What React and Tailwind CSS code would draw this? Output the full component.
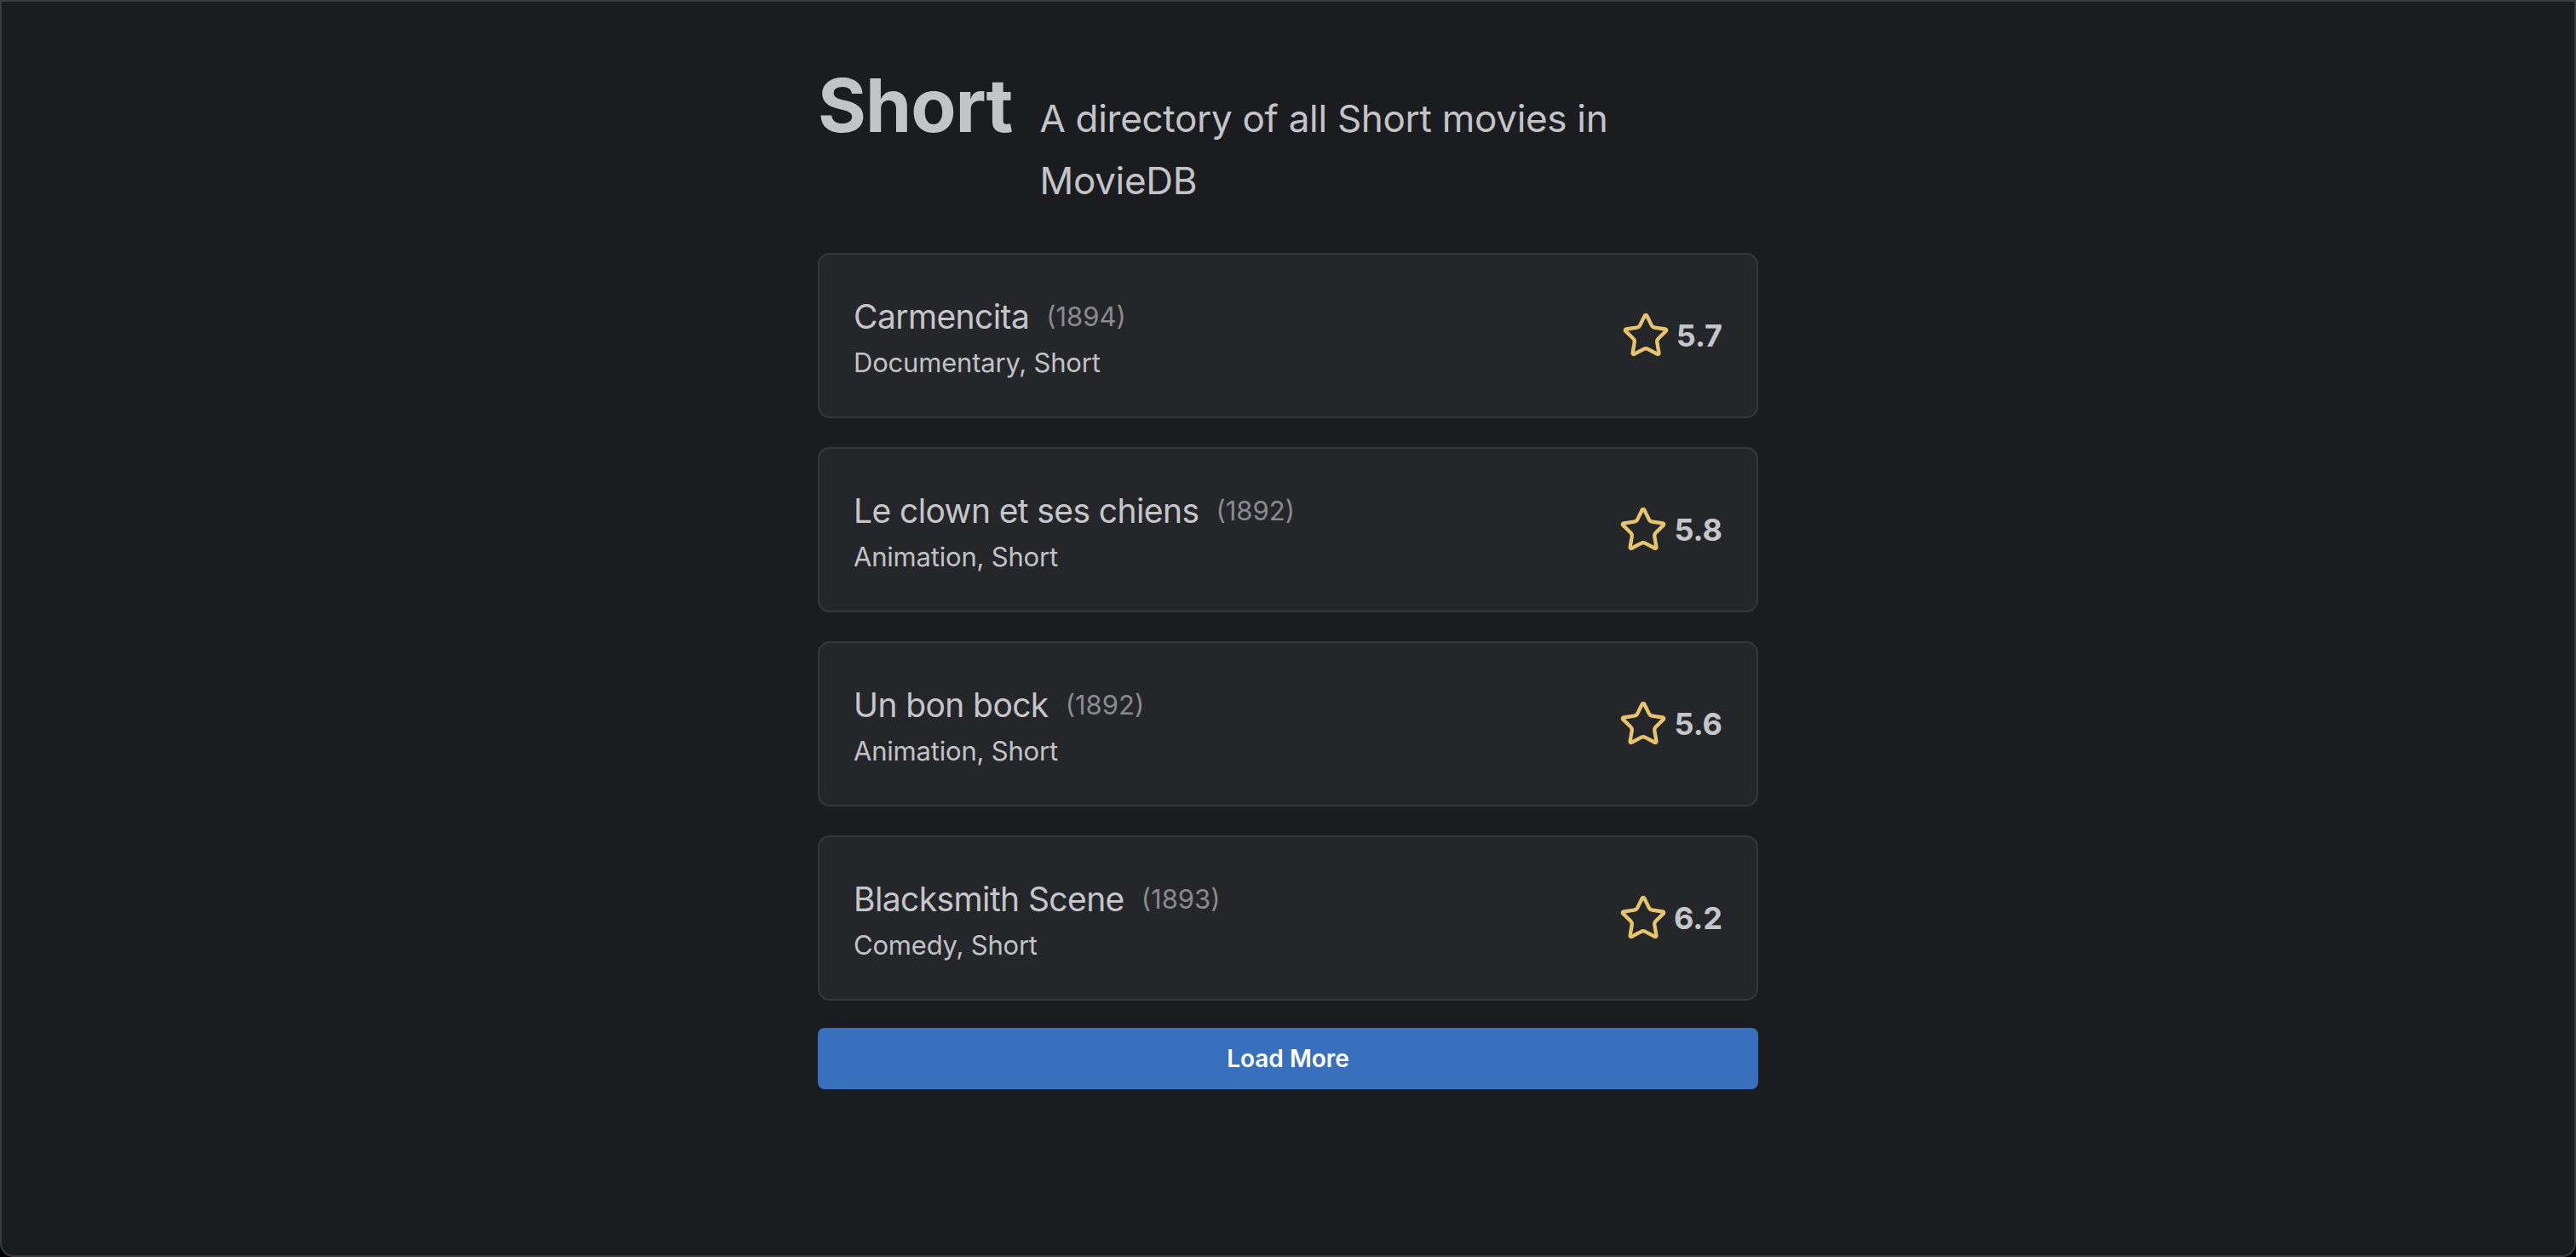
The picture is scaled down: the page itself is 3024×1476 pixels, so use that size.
import React from 'react';

const movies = [
  { title: 'Carmencita', year: 1894, genres: 'Documentary, Short', rating: '5.7' },
  { title: 'Le clown et ses chiens', year: 1892, genres: 'Animation, Short', rating: '5.8' },
  { title: 'Un bon bock', year: 1892, genres: 'Animation, Short', rating: '5.6' },
  { title: 'Blacksmith Scene', year: 1893, genres: 'Comedy, Short', rating: '6.2' },
];

const StarIcon = () => (
  <svg width="58" height="58" viewBox="0 0 24 24" fill="none" stroke="#e6c46b" strokeWidth="1.8" strokeLinecap="round" strokeLinejoin="round">
    <path d="M11.525 2.295a.53.53 0 0 1 .95 0l2.31 4.679a2.123 2.123 0 0 0 1.595 1.16l5.166.756a.53.53 0 0 1 .294.904l-3.736 3.638a2.123 2.123 0 0 0-.611 1.878l.882 5.14a.53.53 0 0 1-.771.56l-4.618-2.428a2.122 2.122 0 0 0-1.973 0L6.396 21.01a.53.53 0 0 1-.77-.56l.881-5.139a2.122 2.122 0 0 0-.611-1.879L2.16 9.795a.53.53 0 0 1 .294-.906l5.165-.755a2.122 2.122 0 0 0 1.597-1.16z" />
  </svg>
);

const MovieCard = ({ movie }) => (
  <div className="h-[194px] flex items-center justify-between px-[40px] bg-[#25262a] border-2 border-[#36373b] rounded-[14px]">
    <div className="flex flex-col pt-[4px]">
      <div className="flex items-center">
        <span className="text-[39px] leading-[60px] tracking-[-0.6px] text-[#c5c6ca]">{movie.title}</span>
        <span className="ml-[20px] text-[31px] leading-[60px] text-[#8a8b8f]">({movie.year})</span>
      </div>
      <span className="text-[31px] leading-[48px] tracking-[-0.2px] text-[#c1c2c6]">{movie.genres}</span>
    </div>
    <div className="flex items-center gap-[7px]">
      <StarIcon />
      <span className="text-[36px] font-bold text-[#c5c6ca]">{movie.rating}</span>
    </div>
  </div>
);

const App = () => {
  return (
    <div className="bg-black h-[1476px] overflow-hidden" style={{ fontFamily: 'Inter, "Noto Sans", sans-serif' }}>
      <div className="h-full bg-[#1b1c1f] border-2 border-[#3a3b3f] rounded-b-[16px]">
        <main className="w-[1104px] mx-auto pt-[78px]">
          <div className="flex items-baseline gap-[32px] mb-[48px]">
            <h1 className="text-[87px] leading-none font-bold text-[#c3c4c8] tracking-[-1px]">Short</h1>
            <p className="text-[44px] leading-[73px] tracking-[-0.3px] text-[#c3c4c8]">A directory of all Short movies in MovieDB</p>
          </div>

          <div className="flex flex-col gap-[34px]">
            {movies.map((m, i) => (
              <MovieCard key={i} movie={m} />
            ))}
          </div>

          <button className="mt-[32px] w-full h-[72px] rounded-[8px] bg-[#3870be] text-white text-[28px] font-semibold">
            Load More
          </button>
        </main>
      </div>
    </div>
  );
};

export default App;
